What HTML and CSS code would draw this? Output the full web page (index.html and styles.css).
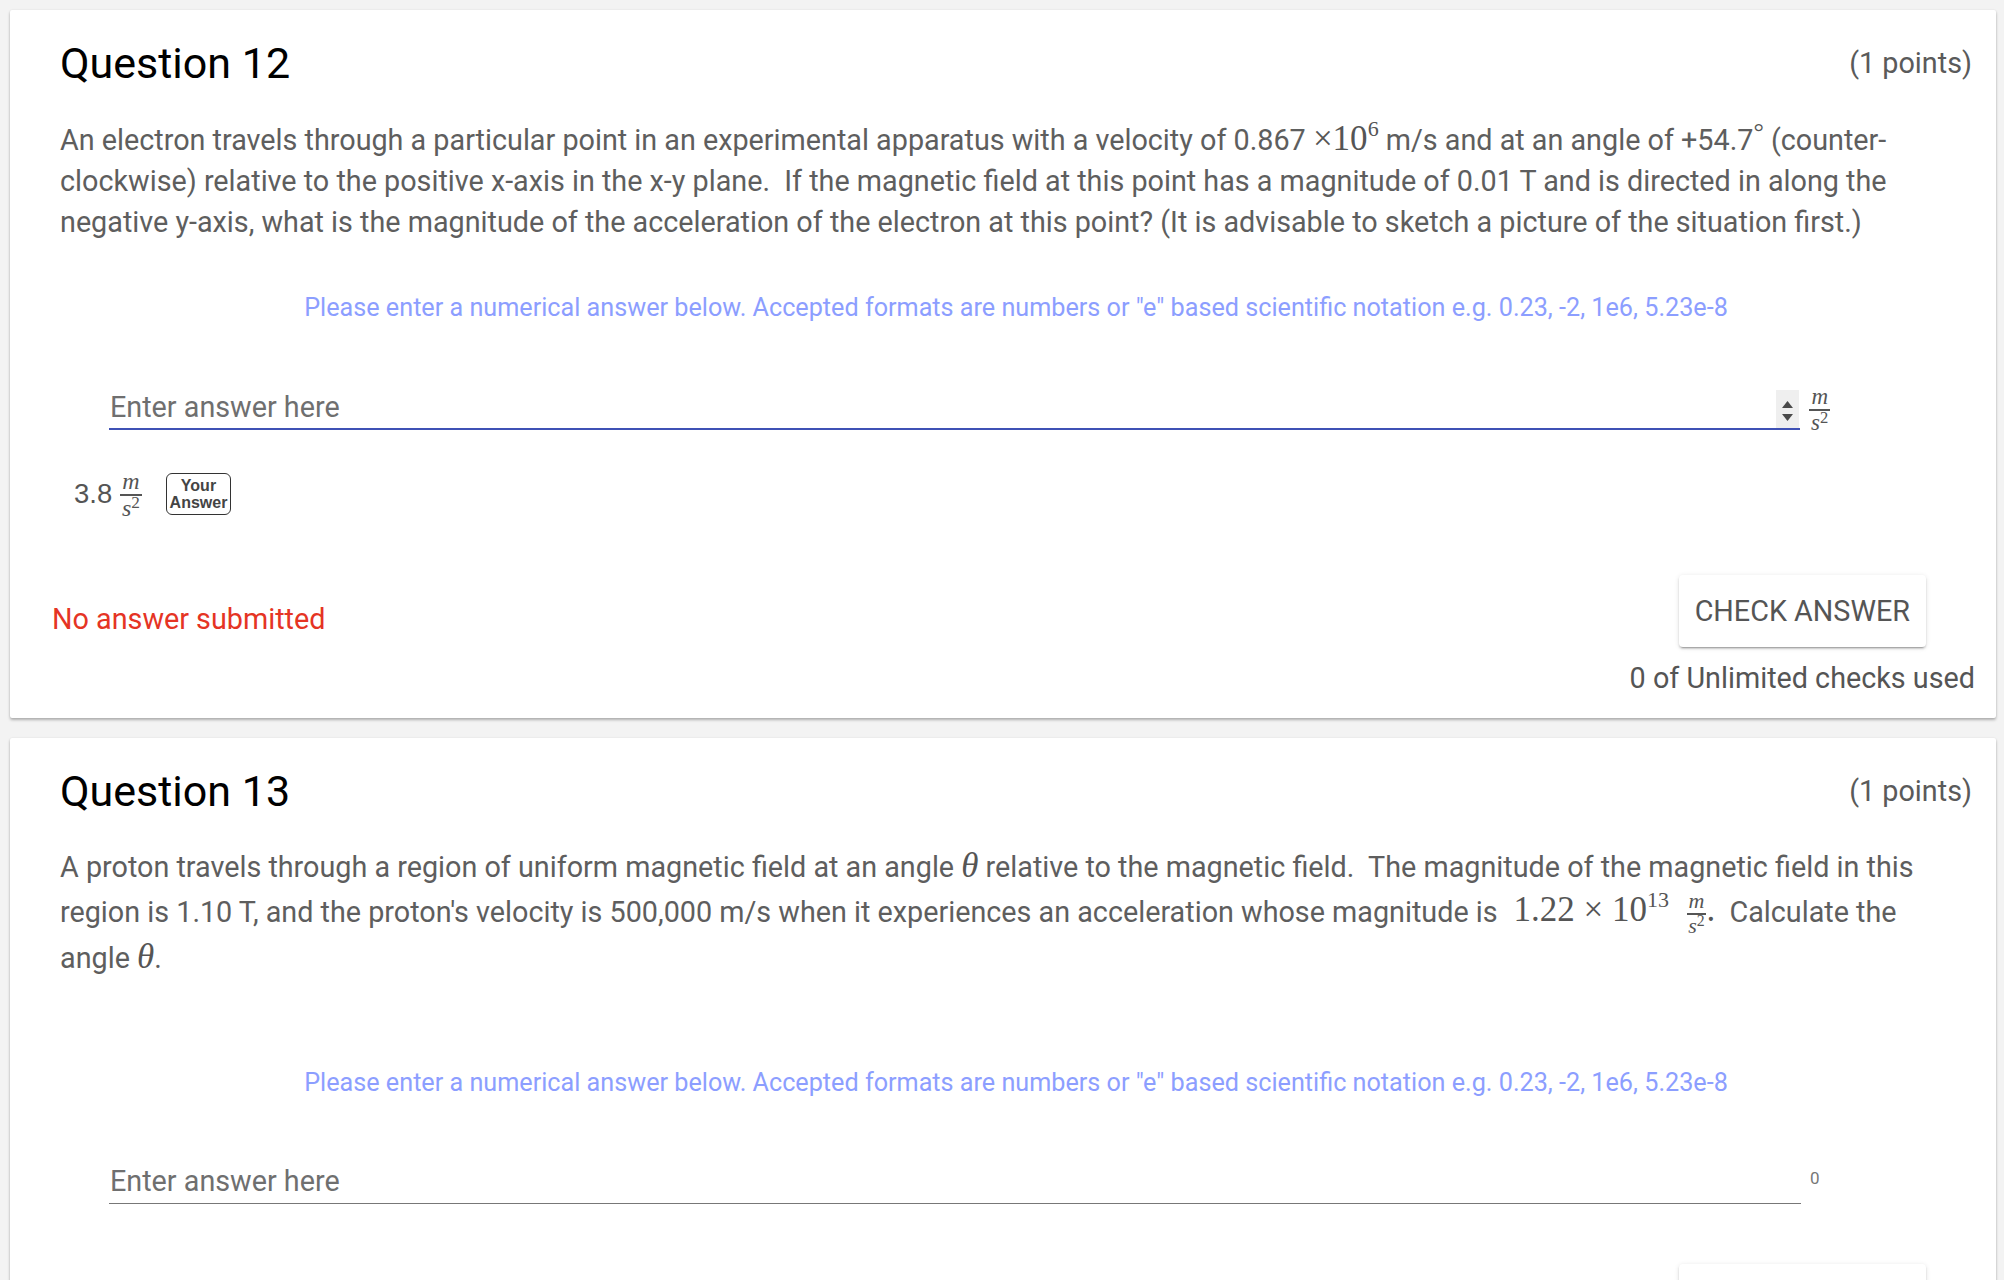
FILE: index.html
```html
<!DOCTYPE html>
<html lang="en">
<head>
<meta charset="utf-8">
<title>Questions</title>
<link rel="stylesheet" href="styles.css">
</head>
<body>
<div class="page">
  <section class="card">
    <header class="q-head">
      <h2 class="q-title">Question 12</h2>
      <span class="q-points">(1 points)</span>
    </header>
    <p class="q-text">An electron travels through a particular point in an experimental apparatus with a velocity of 0.867 <span class="math">×10<sup class="math-sup">6</sup></span> m/s and at an angle of +54.7<span class="math math-deg">°</span> (counter-clockwise) relative to the positive x-axis in the x-y plane.&nbsp; If the magnetic field at this point has a magnitude of 0.01 T and is directed in along the negative y-axis, what is the magnitude of the acceleration of the electron at this point? (It is advisable to sketch a picture of the situation first.)</p>
    <p class="q-hint">Please enter a numerical answer below. Accepted formats are numbers or "e" based scientific notation e.g. 0.23, -2, 1e6, 5.23e-8</p>
    <div class="answer-row">
      <div class="field field--active">
        <input class="field-input" type="text" placeholder="Enter answer here">
        <span class="spinner">
          <svg width="23" height="38" viewBox="0 0 23 38"><path d="M6 18 L11.5 11 L17 18 Z" fill="#4a4a4a"/><path d="M6 24 L11.5 31 L17 24 Z" fill="#4a4a4a"/></svg>
        </span>
      </div>
      <span class="frac frac--unit"><span class="frac-num">m</span><span class="frac-den">s<sup class="frac-sup">2</sup></span></span>
    </div>
    <div class="prev">
      <span class="prev-val">3.8</span>
      <span class="frac frac--prev"><span class="frac-num">m</span><span class="frac-den">s<sup class="frac-sup">2</sup></span></span>
      <span class="badge">Your<br>Answer</span>
    </div>
    <div class="q-foot">
      <span class="status">No answer submitted</span>
      <div class="check">
        <button class="check-btn" type="button">CHECK ANSWER</button>
        <span class="check-count">0 of Unlimited checks used</span>
      </div>
    </div>
  </section>

  <section class="card">
    <header class="q-head">
      <h2 class="q-title">Question 13</h2>
      <span class="q-points">(1 points)</span>
    </header>
    <p class="q-text q-text--trail">A proton travels through a region of uniform magnetic field at an angle <span class="math math-it">θ</span> relative to the magnetic field.&nbsp; The magnitude of the magnetic field in this region is 1.10 T, and the proton's velocity is 500,000 m/s when it experiences an acceleration whose magnitude is <span class="math">&nbsp;1.22 × 10<sup class="math-sup">13</sup>&nbsp; <span class="frac frac--inline"><span class="frac-num">m</span><span class="frac-den">s<sup class="frac-sup">2</sup></span></span>.</span>&nbsp; Calculate the angle <span class="math math-it">θ</span>.</p>
    <p class="q-hint">Please enter a numerical answer below. Accepted formats are numbers or "e" based scientific notation e.g. 0.23, -2, 1e6, 5.23e-8</p>
    <div class="answer-row">
      <div class="field">
        <input class="field-input" type="text" placeholder="Enter answer here">
      </div>
      <span class="unit-empty">0</span>
    </div>
    <div class="q-foot">
      <span class="status">No answer submitted</span>
      <div class="check">
        <button class="check-btn" type="button">CHECK ANSWER</button>
        <span class="check-count">0 of Unlimited checks used</span>
      </div>
    </div>
  </section>
</div>
</body>
</html>
```
FILE: styles.css
```css
html, body {
  margin: 0;
  padding: 0;
  background: #f3f3f3;
}
body {
  font-family: Roboto, "Noto Sans", sans-serif;
  overflow: hidden;
}
.page {
  padding: 10px 8px 0 10px;
  display: flex;
  flex-direction: column;
  gap: 20px;
}
.card {
  background: #fff;
  box-shadow: 0 2px 3px rgba(0,0,0,0.28), 0 0 2px rgba(0,0,0,0.08);
  border-radius: 2px;
  padding: 27px 24px 22px 50px;
}
.q-head {
  display: flex;
  justify-content: space-between;
  align-items: center;
  height: 52px;
}
.q-title {
  margin: 0;
  font-weight: 400;
  font-size: 43px;
  line-height: 52px;
  color: #000;
}
.q-points {
  font-size: 28.75px;
  color: #5a5a5a;
}
.q-text {
  margin: 31px 0 0;
  font-size: 28.75px;
  line-height: 41px;
  color: #5e5e5e;
}
.q-text--trail {
  line-height: 43.5px;
  margin-top: 29px;
  padding-bottom: 38px;
}
.math {
  font-family: "Liberation Serif", "DejaVu Serif", serif;
  font-size: 35px;
  line-height: 0;
  color: #555;
}
.math-sup {
  font-size: 22px;
  line-height: 0;
  vertical-align: 14px;
}
.math-deg {
  font-size: 26px;
  vertical-align: 10px;
}
.math-it {
  font-style: italic;
}
.q-hint {
  margin: 50px 0 0;
  text-align: center;
  font-size: 25.2px;
  line-height: 30px;
  color: #8c9eff;
}
.answer-row {
  display: flex;
  align-items: flex-end;
  margin-top: 62px;
  padding: 0 142px 0 49px;
}
.field {
  flex: 1;
  display: flex;
  align-items: center;
  border-bottom: 1px solid #777;
  padding-bottom: 1px;
}
.field--active {
  border-bottom: 2px solid #3f51b5;
  padding-bottom: 0;
}
.field-input {
  flex: 1;
  border: 0;
  outline: 0;
  background: transparent;
  height: 42px;
  padding: 0 1px;
  font-family: Roboto, sans-serif;
  font-size: 28.75px;
  color: #333;
}
.field-input::placeholder {
  color: #6f6f6f;
}
.spinner {
  display: block;
  width: 23px;
  height: 38px;
  background: #efefef;
  margin-right: 1px;
  align-self: flex-end;
}
.spinner svg {
  display: block;
}
.frac {
  display: inline-flex;
  flex-direction: column;
  align-items: center;
  font-family: "Liberation Serif", "DejaVu Serif", serif;
  font-style: italic;
  color: #555;
  line-height: 1;
}
.frac-num {
  border-bottom: 2px solid #555;
  padding: 0 2px 1px;
}
.frac-sup {
  font-style: normal;
  font-size: 0.72em;
  vertical-align: 0.45em;
  line-height: 0;
}
.frac--unit {
  font-size: 23px;
  margin-left: 9px;
  margin-bottom: -4px;
}
.frac--prev {
  font-size: 24px;
  margin-left: 8px;
}
.frac--inline {
  font-size: 22px;
  vertical-align: middle;
  line-height: 1;
}
.unit-empty {
  margin-left: 9px;
  width: 20px;
  font-size: 17px;
  color: #777;
  align-self: center;
  margin-bottom: 8px;
}
.prev {
  display: flex;
  align-items: center;
  margin-top: 43px;
  padding-left: 14px;
  height: 42px;
}
.prev-val {
  font-family: "Liberation Sans", Arial, sans-serif;
  font-size: 27.5px;
  color: #555;
}
.badge {
  margin-left: 24px;
  border: 1.5px solid #333;
  border-radius: 6px;
  padding: 3px 3px;
  font-family: "Liberation Sans", Arial, sans-serif;
  font-weight: 700;
  font-size: 16px;
  line-height: 17px;
  color: #444;
  text-align: center;
}
.q-foot {
  display: flex;
  justify-content: space-between;
  align-items: flex-start;
  margin-top: 60px;
}
.status {
  margin-top: 26px;
  margin-left: -8px;
  font-size: 28.75px;
  line-height: 36px;
  color: #e53424;
}
.check {
  display: flex;
  flex-direction: column;
  align-items: center;
  margin-right: -3px;
  gap: 13px;
}
.check-btn {
  height: 72px;
  padding: 0 16px;
  border: 0;
  border-radius: 4px;
  background: #fff;
  font-family: Roboto, sans-serif;
  font-size: 28.75px;
  color: #555;
  box-shadow: 0 2px 2px rgba(0,0,0,0.14), 0 3px 1px -2px rgba(0,0,0,0.2), 0 1px 5px rgba(0,0,0,0.12);
}
.check-count {
  font-size: 28.75px;
  line-height: 36px;
  color: #555;
}
```
